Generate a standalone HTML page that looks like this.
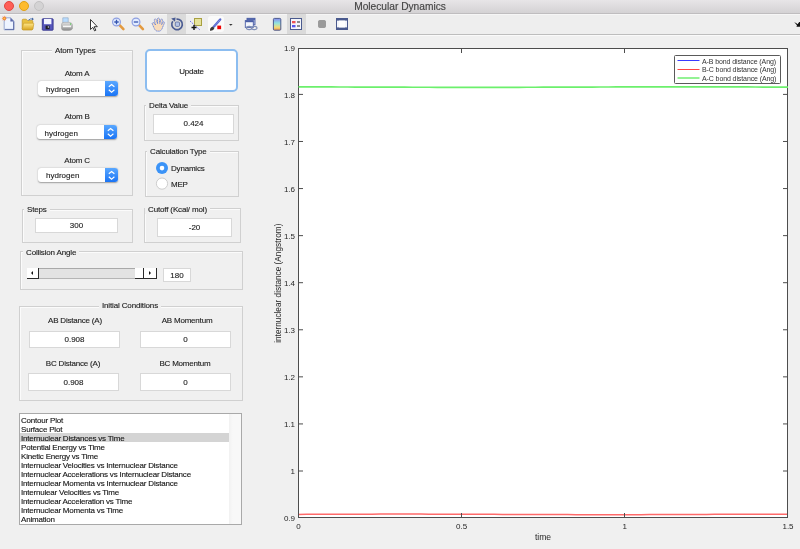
<!DOCTYPE html>
<html><head><meta charset="utf-8">
<style>
*{margin:0;padding:0;box-sizing:border-box}
html,body{width:800px;height:549px;overflow:hidden;-webkit-font-smoothing:antialiased;-webkit-text-stroke:0.2px rgba(30,30,30,0.6);background:#f0f0f0;font-family:"Liberation Sans",sans-serif;color:#222}
.abs{position:absolute}
#title{position:absolute;left:0;top:0;width:800px;height:14px;background:linear-gradient(#e7e5e7,#d4d2d4);border-bottom:1px solid #bfbdbf}
#title .t{position:absolute;left:0;width:800px;top:1px;text-align:center;font-size:10.2px;line-height:12.5px;color:#4a4a4a}
.tl{position:absolute;top:1px;width:10px;height:10px;border-radius:50%}
#toolbar{position:absolute;left:0;top:14px;width:800px;height:21px;background:#eeeeee;border-top:1px solid #f6f6f6;border-bottom:1px solid #bdbdbd;box-shadow:0 1px 0 #fafafa}
.pan{position:absolute;border:1px solid #d0d0d0;box-shadow:inset 1px 1px 0 #fbfbfb}
.ptitle{position:absolute;font-size:8px;letter-spacing:-0.15px;line-height:9px;background:#f0f0f0;padding:0 3px;color:#222;white-space:nowrap}
.lbl{position:absolute;font-size:8px;letter-spacing:-0.2px;line-height:9px;white-space:nowrap;text-align:center;color:#222}
.edit{position:absolute;background:#fff;border:1px solid #d8d8d8;font-size:8px;text-align:center;color:#222;padding-top:1px}
.pop{position:absolute;background:#fff;border-radius:3px;box-shadow:0 0.5px 1.5px rgba(0,0,0,0.35);font-size:8px;color:#222}
.pop .arr{position:absolute;right:0;top:0;bottom:0;width:13px;background:linear-gradient(#5aa8ff,#1a74f5);border-radius:0 3px 3px 0}
</style></head><body><div style="position:absolute;left:0;top:0;width:800px;height:549px;will-change:transform">
<div id="title">
 <div class="tl" style="left:4px;background:#fe5f57;border:0.5px solid #e2463f"></div>
 <div class="tl" style="left:19px;background:#febb2e;border:0.5px solid #e1a116"></div>
 <div class="tl" style="left:34px;background:#d4d3d4;border:0.5px solid #c3c2c3"></div>
 <div class="t">Molecular Dynamics</div>
</div>
<div id="toolbar"></div>
<svg class="abs" style="left:0;top:13px" width="800" height="22">
<defs>
<linearGradient id="fold" x1="0" y1="0" x2="0" y2="1"><stop offset="0" stop-color="#ffe78a"/><stop offset="1" stop-color="#d9a520"/></linearGradient>
<linearGradient id="cb" x1="0" y1="0" x2="0" y2="1"><stop offset="0" stop-color="#8a88f0"/><stop offset="0.4" stop-color="#8ee4e0"/><stop offset="0.75" stop-color="#f2dc78"/><stop offset="1" stop-color="#f09450"/></linearGradient>
<linearGradient id="prn" x1="0" y1="0" x2="0" y2="1"><stop offset="0" stop-color="#e0e0e0"/><stop offset="1" stop-color="#8a8a8a"/></linearGradient>
</defs>
<!-- highlights -->
<rect x="167" y="1" width="19" height="20" fill="#dadada"/>
<rect x="287" y="1" width="19" height="20" fill="#dadada"/>
<rect x="208" y="3" width="16" height="16" rx="3" fill="#fafafa"/>
<!-- new doc -->
<path d="M4.2 4.8h6.4l3.4 3.4v8.6h-9.8z" fill="#eef4ff" stroke="#8ea0cc" stroke-width="0.9"/>
<path d="M5 16.4h9M13.6 8.5v8" stroke="#6070a8" stroke-width="1"/>
<path d="M10.4 4.8l3.6 3.6h-3.6z" fill="#5a68a8"/>
<path d="M4.3 2.6l0.5 1.5 1.5-0.6-0.7 1.4 1.5 0.6-1.5 0.5 0.6 1.5-1.4-0.7-0.5 1.5-0.5-1.5-1.5 0.7 0.7-1.5-1.5-0.5 1.5-0.6-0.7-1.4 1.5 0.6z" fill="#f07a3a"/>
<circle cx="4.3" cy="5.4" r="0.9" fill="#f8d040"/>
<!-- folder -->
<path d="M22.2 7.2q0-1 1-1h3l1 1.2h4.8q0.8 0 0.8 0.8v7.6q0 1-1 1h-8.6q-1 0-1-1z" fill="#e8c040" stroke="#c09420" stroke-width="0.7"/>
<path d="M23.6 10.2h9.6q0.8 0 0.6 0.8l-1 4.8q-0.2 1-1.2 1h-8.6q-1 0-0.8-1z" fill="url(#fold)" stroke="#c89a24" stroke-width="0.6"/>
<path d="M28.5 7.2q1.8-2 4.6-1.2" fill="none" stroke="#4a74b8" stroke-width="1"/>
<path d="M32.2 4.6l1.6 1.6-1.8 1z" fill="#3a5a98"/>
<!-- save -->
<rect x="42.3" y="5.8" width="10.8" height="11.4" rx="0.6" fill="#5656bc" stroke="#34348c" stroke-width="0.9"/>
<rect x="44" y="6" width="7.4" height="5.2" fill="#f2f4ff"/>
<rect x="45.6" y="12.6" width="4" height="3.6" fill="#202028"/>
<rect x="47.8" y="13.2" width="1" height="1.6" fill="#d0d0e0"/>
<!-- print -->
<path d="M62.8 4.8h5.4v5h-5.4z" fill="#b9dcff" stroke="#8aa2c0" stroke-width="0.6"/>
<path d="M61.5 11.5q0-2.2 2.5-2.2h5q3 0 3.5 2.5v3.5q-0.5 2.2-3.5 2.2h-5q-2.5 0-2.5-2.2z" fill="url(#prn)" stroke="#9a9a9a" stroke-width="0.5"/>
<rect x="63" y="12.6" width="8" height="1.6" fill="#f6f6f6"/>
<circle cx="70.6" cy="11" r="0.7" fill="#5c5"/>
<!-- arrow -->
<path d="M90.5 6.5v10l2.3-2.2 1.8 3.6 1.3-0.7-1.8-3.5h3.2z" fill="#fff" stroke="#222" stroke-width="0.9" stroke-linejoin="round"/>
<!-- zoom in -->
<path d="M119.8 12.3l3.6 3.8" stroke="#e39a40" stroke-width="2.6" stroke-linecap="round"/>
<circle cx="116.5" cy="9" r="3.9" fill="#e2ecff" stroke="#8d9ee0" stroke-width="1.2"/>
<path d="M114.3 9h4.4M116.5 6.8v4.4" stroke="#3656b0" stroke-width="1.3"/>
<!-- zoom out -->
<path d="M139.3 12.3l3.6 3.8" stroke="#e39a40" stroke-width="2.6" stroke-linecap="round"/>
<circle cx="136" cy="9" r="3.9" fill="#e2ecff" stroke="#8d9ee0" stroke-width="1.2"/>
<path d="M133.8 9h4.4" stroke="#3656b0" stroke-width="1.3"/>
<!-- hand -->
<path transform="translate(-1 0)" d="M153.5 11.5q-0.8-1.2 0.2-1.8q1-0.4 1.8 0.8l1 1.5l-1.2-4.6q-0.2-1.2 0.8-1.4q1-0.2 1.3 0.9l1.2 3.8l-0.2-4.6q0-1.1 1-1.1q1 0 1.1 1.1l0.3 4.4l0.9-3.6q0.3-1 1.2-0.8q0.9 0.3 0.7 1.3l-1 4.2l1.2-2.2q0.6-0.9 1.3-0.5q0.7 0.5 0.2 1.4l-1.8 4.2q-0.8 2.8-2.8 3.6h-2.6q-1.6-0.4-2.6-2.2z" fill="#f8dcbc" stroke="#5a78d8" stroke-width="0.8" stroke-dasharray="1.4 0.4"/>
<!-- rotate -->
<path d="M172.8 8.2A5.3 5.3 0 1 0 176.5 6.1" fill="none" stroke="#4a5b92" stroke-width="1.7"/>
<path d="M171.2 5.6l4.4-1.2-0.6 4.4z" fill="#4a5b92"/>
<rect x="175.3" y="9" width="4.2" height="4.4" rx="1" fill="#b4c3e6" stroke="#4a5b92" stroke-width="0.7"/>
<!-- data cursor -->
<rect x="194.5" y="5.5" width="7" height="7" fill="#e6e29c" stroke="#a8a040" stroke-width="1"/>
<path d="M190 8l10 9" stroke="#5050ee" stroke-width="0.8" stroke-dasharray="1.5 1"/>
<path d="M191.5 14.5h5M194 12v5" stroke="#111" stroke-width="1.4"/>
<!-- brush -->
<path d="M214 13.5l6.2-7" stroke="#5a6ad0" stroke-width="2.4" stroke-linecap="round"/>
<path d="M215 12.5l5-5.6" stroke="#c8d0f8" stroke-width="0.6" stroke-dasharray="0.8 0.8"/>
<path d="M210 17.8q-0.2-3.2 2.6-4.3l1.8 1.6q-0.9 3-4.4 2.7z" fill="#3a3a3a"/>
<rect x="217.3" y="12.6" width="3.8" height="3.6" fill="#ee0000"/>
<path d="M229 11h3.6l-1.8 1.8z" fill="#333"/>
<!-- link -->
<rect x="247" y="5.3" width="8" height="6.5" fill="#b8c4e4" stroke="#4a5ea6" stroke-width="0.9"/>
<rect x="247" y="5.3" width="8" height="1.6" fill="#4a5ea6"/>
<rect x="245.3" y="7.6" width="8" height="6.8" fill="#f2f5fc" stroke="#4a5ea6" stroke-width="0.9"/>
<rect x="245.3" y="7.6" width="8" height="1.6" fill="#4a5ea6"/>
<ellipse cx="249.2" cy="15" rx="2.8" ry="1.6" fill="none" stroke="#8090b8" stroke-width="1.1"/>
<ellipse cx="254.2" cy="15" rx="2.8" ry="1.6" fill="none" stroke="#8090b8" stroke-width="1.1"/>
<!-- colorbar -->
<rect x="273.4" y="5.4" width="7.4" height="11.8" rx="1" fill="url(#cb)" stroke="#4a5a8e" stroke-width="1"/>
<!-- legend -->
<rect x="290.5" y="5.5" width="11" height="11" fill="#f4f6fb" stroke="#4a5a8e" stroke-width="1"/>
<rect x="292" y="8" width="3.5" height="2.3" fill="#ee5555"/>
<rect x="292" y="12" width="3.5" height="2.3" fill="#5555ee"/>
<path d="M297 9h3M297 13h3" stroke="#222" stroke-width="1"/>
<!-- gray square -->
<rect x="318.5" y="7.5" width="7" height="7" rx="1" fill="#9a9a9a" stroke="#808080" stroke-width="0.6"/>
<!-- window -->
<rect x="336.5" y="5.5" width="11" height="11" fill="#f4f6fb" stroke="#4a5a8e" stroke-width="1"/>
<rect x="337" y="6" width="10" height="1.6" fill="#4a5a8e"/>
<rect x="337" y="14.4" width="10" height="1.6" fill="#4a5a8e"/>
<rect x="339" y="7.6" width="6" height="6.8" fill="#fff"/>
<!-- right icon -->
<path d="M794.3 9.6q1.6-0.3 3.2 1.6l1.8-2.2h0.7v4.8h-3.6l0.6-1.3q-1.2-1.8-2.7-2.9z" fill="#111"/>
</svg>


<!-- Atom Types -->
<div class="pan" style="left:21px;top:50px;width:112px;height:146px"></div>
<div class="ptitle" style="left:52px;top:46px">Atom Types</div>
<div class="lbl" style="left:22px;width:110px;top:69px">Atom A</div>
<div class="pop" style="left:38px;top:81.3px;width:79.5px;height:14.5px"><span class="abs" style="left:8px;top:3.5px">hydrogen</span><div class="arr"><svg width="13" height="15" style="position:absolute;left:0;top:0"><path d="M3.8 5.8L6.6 3.5L9.4 5.8M3.8 8.8L6.6 11.1L9.4 8.8" fill="none" stroke="#fff" stroke-width="1.2"/></svg></div></div>
<div class="lbl" style="left:22px;width:110px;top:112px">Atom B</div>
<div class="pop" style="left:37px;top:125.3px;width:80px;height:14px"><span class="abs" style="left:7.5px;top:3.3px">hydrogen</span><div class="arr"><svg width="13" height="15" style="position:absolute;left:0;top:0"><path d="M3.8 5.8L6.6 3.5L9.4 5.8M3.8 8.8L6.6 11.1L9.4 8.8" fill="none" stroke="#fff" stroke-width="1.2"/></svg></div></div>
<div class="lbl" style="left:22px;width:110px;top:156px">Atom C</div>
<div class="pop" style="left:38px;top:167.5px;width:80px;height:14px"><span class="abs" style="left:8px;top:3.3px">hydrogen</span><div class="arr"><svg width="13" height="15" style="position:absolute;left:0;top:0"><path d="M3.8 5.8L6.6 3.5L9.4 5.8M3.8 8.8L6.6 11.1L9.4 8.8" fill="none" stroke="#fff" stroke-width="1.2"/></svg></div></div>

<!-- Update -->
<div class="abs" style="left:144.5px;top:48.7px;width:93.3px;height:43.8px;background:#fff;border:2.3px solid #8cbdf0;border-radius:5px"></div>
<div class="lbl" style="left:145px;width:93px;top:67px">Update</div>

<!-- Delta -->
<div class="pan" style="left:144px;top:105px;width:95px;height:36px"></div>
<div class="ptitle" style="left:146px;top:100.6px">Delta Value</div>
<div class="edit" style="left:153px;top:113.5px;width:81px;height:20.5px;line-height:17px;padding-top:0">0.424</div>

<!-- Calc type -->
<div class="pan" style="left:145px;top:151px;width:94px;height:46px"></div>
<div class="ptitle" style="left:147px;top:146.6px">Calculation Type</div>

<!-- Steps -->
<div class="pan" style="left:22px;top:208.5px;width:111px;height:34.5px"></div>
<div class="ptitle" style="left:24px;top:204.6px">Steps</div>
<div class="edit" style="left:35.3px;top:217.7px;width:82.3px;height:15.5px;line-height:13px;padding-top:0">300</div>

<!-- Cutoff -->
<div class="pan" style="left:144px;top:208px;width:97px;height:35px"></div>
<div class="ptitle" style="left:145px;top:204.6px">Cutoff (Kcal/ mol)</div>
<div class="edit" style="left:157px;top:218px;width:75px;height:19px;line-height:17px;padding-top:0">-20</div>

<!-- Collision -->
<div class="pan" style="left:20px;top:251.3px;width:222.7px;height:38.7px"></div>
<div class="ptitle" style="left:23px;top:247.6px">Collision Angle</div>
<div class="edit" style="left:163px;top:268px;width:28px;height:14px;line-height:12px">180</div>

<!-- Initial -->
<div class="pan" style="left:19px;top:306px;width:224px;height:95px"></div>
<div class="ptitle" style="left:99px;top:301px">Initial Conditions</div>
<div class="lbl" style="left:25px;width:100px;top:316px">AB Distance (A)</div>
<div class="lbl" style="left:137px;width:100px;top:316px">AB Momentum</div>
<div class="edit" style="left:29px;top:330.5px;width:91px;height:17px;line-height:14px">0.908</div>
<div class="edit" style="left:140px;top:330.5px;width:91px;height:17px;line-height:14px">0</div>
<div class="lbl" style="left:23px;width:100px;top:359px">BC Distance (A)</div>
<div class="lbl" style="left:135px;width:100px;top:359px">BC Momentum</div>
<div class="edit" style="left:28px;top:373px;width:91px;height:18px;line-height:16px">0.908</div>
<div class="edit" style="left:140px;top:373px;width:91px;height:18px;line-height:16px">0</div>

<!-- Listbox -->
<div class="abs" style="left:19px;top:413px;width:223px;height:112px;background:#fff;border:1px solid #a9a9a9"></div>


<!-- radios -->
<svg class="abs" style="left:150px;top:158px" width="24" height="36">
<circle cx="12" cy="10.1" r="6" fill="#3b93f7"/>
<circle cx="12" cy="10.1" r="2.3" fill="#fff"/>
<circle cx="12" cy="25.6" r="5.6" fill="#fff" stroke="#c2c2c2" stroke-width="0.8"/>
</svg>
<div class="lbl" style="left:171px;top:164px;text-align:left">Dynamics</div>
<div class="lbl" style="left:171px;top:180px;text-align:left">MEP</div>
<!-- slider -->
<div class="abs" style="left:38px;top:268px;width:98px;height:11px;background:#e3e3e3;border-top:1px solid #a9a9a9;border-bottom:1px solid #b5b5b5"></div>
<div class="abs" style="left:27px;top:268px;width:12px;height:11px;background:#fff;border-right:1px solid #2a2a2a;border-bottom:1px solid #2a2a2a"></div>
<div class="abs" style="left:31px;top:271px;width:0;height:0;border-top:2.5px solid transparent;border-bottom:2.5px solid transparent;border-right:2.5px solid #111"></div>
<div class="abs" style="left:135px;top:268px;width:9px;height:11px;background:#fff;border-right:1px solid #2a2a2a;border-bottom:1px solid #2a2a2a"></div>
<div class="abs" style="left:144px;top:268px;width:13px;height:11px;background:#fff;border-right:1px solid #2a2a2a;border-bottom:1px solid #2a2a2a"></div>
<div class="abs" style="left:149px;top:271px;width:0;height:0;border-top:2.5px solid transparent;border-bottom:2.5px solid transparent;border-left:2.5px solid #111"></div>
<!-- list -->
<div class="abs" style="left:229px;top:414px;width:12px;height:110px;background:linear-gradient(to right,#f1f1f1,#f8f8f8 30%,#f8f8f8)"></div>
<div class="abs" style="left:20px;top:433px;width:209px;height:9px;background:#d4d4d4"></div>
<div class="abs" style="left:21px;top:415.8px;font-size:8px;letter-spacing:-0.2px;line-height:9px;white-space:nowrap;color:#111">Contour Plot<br>Surface Plot<br>Internuclear Distances vs Time<br>Potential Energy vs Time<br>Kinetic Energy vs Time<br>Internuclear Velocities vs Internuclear Distance<br>Internuclear Accelerations vs Internuclear Distance<br>Internuclear Momenta vs Internuclear Distance<br>Internulear Velocities vs Time<br>Internuclear Acceleration vs Time<br>Internuclear Momenta vs Time<br>Animation</div>
<!-- PLOT -->
<svg class="abs" style="left:0;top:0" width="800" height="549">
<rect x="298" y="48" width="490" height="470" fill="#fff"/>
<rect x="298.5" y="48.5" width="489" height="469" fill="none" stroke="#4d4d4d" stroke-width="1"/>
<polyline points="298.5,514.39 306.7,514.35 314.8,514.32 323.0,514.29 331.1,514.25 339.3,514.22 347.4,514.20 355.6,514.17 363.8,514.15 371.9,514.14 380.1,514.12 388.2,514.11 396.4,514.11 404.5,514.11 412.7,514.11 420.9,514.12 429.0,514.13 437.2,514.15 445.3,514.17 453.5,514.19 461.6,514.22 469.8,514.25 478.0,514.28 486.1,514.32 494.3,514.35 502.4,514.39 510.6,514.42 518.8,514.45 526.9,514.49 535.1,514.52 543.2,514.55 551.4,514.58 559.5,514.60 567.7,514.62 575.9,514.64 584.0,514.66 592.2,514.67 600.3,514.67 608.5,514.67 616.6,514.67 624.8,514.66 633.0,514.65 641.1,514.63 649.3,514.61 657.4,514.59 665.6,514.56 673.7,514.53 681.9,514.50 690.1,514.47 698.2,514.43 706.4,514.40 714.5,514.36 722.7,514.33 730.8,514.30 739.0,514.26 747.2,514.23 755.3,514.20 763.5,514.18 771.6,514.16 779.8,514.14 788.0,514.13" fill="none" stroke="#ff6a6a" stroke-width="1.5"/>
<polyline points="298.5,86.88 306.7,86.90 314.8,86.91 323.0,86.93 331.1,86.95 339.3,86.98 347.4,87.01 355.6,87.03 363.8,87.06 371.9,87.09 380.1,87.12 388.2,87.15 396.4,87.18 404.5,87.20 412.7,87.23 420.9,87.25 429.0,87.27 437.2,87.29 445.3,87.30 453.5,87.32 461.6,87.32 469.8,87.33 478.0,87.33 486.1,87.33 494.3,87.32 502.4,87.31 510.6,87.30 518.8,87.28 526.9,87.26 535.1,87.24 543.2,87.21 551.4,87.19 559.5,87.16 567.7,87.13 575.9,87.10 584.0,87.07 592.2,87.04 600.3,87.02 608.5,86.99 616.6,86.96 624.8,86.94 633.0,86.92 641.1,86.90 649.3,86.89 657.4,86.87 665.6,86.87 673.7,86.86 681.9,86.86 690.1,86.86 698.2,86.87 706.4,86.88 714.5,86.89 722.7,86.91 730.8,86.93 739.0,86.95 747.2,86.97 755.3,87.00 763.5,87.03 771.6,87.05 779.8,87.08 788.0,87.11" fill="none" stroke="#6cf06c" stroke-width="1.7"/>
<path d="M298 517.5h5M788 517.5h-5M298 471.0h5M788 471.0h-5M298 423.92499999999995h5M788 423.92499999999995h-5M298 376.8499999999999h5M788 376.8499999999999h-5M298 329.775h5M788 329.775h-5M298 282.70000000000005h5M788 282.70000000000005h-5M298 235.62500000000003h5M788 235.62500000000003h-5M298 188.54999999999998h5M788 188.54999999999998h-5M298 141.47499999999994h5M788 141.47499999999994h-5M298 94.4h5M788 94.4h-5M298 48.5h5M788 48.5h-5M298.5 518v-5M298.5 48v5M461.5 518v-5M461.5 48v5M624.5 518v-5M624.5 48v5M787.5 518v-5M787.5 48v5" stroke="#4d4d4d" stroke-width="1"/>
<g font-family="Liberation Sans" font-size="8" fill="#262626">
<text x="295" y="521.3" text-anchor="end">0.9</text>
<text x="295" y="474.2" text-anchor="end">1</text>
<text x="295" y="427.1" text-anchor="end">1.1</text>
<text x="295" y="380.0" text-anchor="end">1.2</text>
<text x="295" y="333.0" text-anchor="end">1.3</text>
<text x="295" y="285.9" text-anchor="end">1.4</text>
<text x="295" y="238.8" text-anchor="end">1.5</text>
<text x="295" y="191.7" text-anchor="end">1.6</text>
<text x="295" y="144.7" text-anchor="end">1.7</text>
<text x="295" y="97.6" text-anchor="end">1.8</text>
<text x="295" y="50.5" text-anchor="end">1.9</text>
<text x="298.5" y="529" text-anchor="middle">0</text>
<text x="461.6" y="529" text-anchor="middle">0.5</text>
<text x="624.8" y="529" text-anchor="middle">1</text>
<text x="788.0" y="529" text-anchor="middle">1.5</text>
<text x="543" y="540" font-size="8.6" text-anchor="middle">time</text>
<text transform="translate(281 283.2) rotate(-90)" font-size="8.25" text-anchor="middle">internuclear distance (Angstrom)</text>
</g>
<rect x="674.5" y="55.5" width="106" height="28" rx="1" fill="#fff" stroke="#5a5a5a" stroke-width="1"/>
<path d="M677.5 60.5h22" stroke="#3a3aff" stroke-width="1"/>
<text x="702" y="63.6" font-family="Liberation Sans" font-size="7" letter-spacing="-0.1" fill="#333">A-B bond distance (Ang)</text>
<path d="M677.5 69.5h22" stroke="#ff4444" stroke-width="1"/>
<text x="702" y="72.2" font-family="Liberation Sans" font-size="7" letter-spacing="-0.1" fill="#333">B-C bond distance (Ang)</text>
<path d="M677.5 78.0h22" stroke="#70ee70" stroke-width="1.5"/>
<text x="702" y="80.8" font-family="Liberation Sans" font-size="7" letter-spacing="-0.1" fill="#333">A-C bond distance (Ang)</text>
</svg>
</div></body></html>
